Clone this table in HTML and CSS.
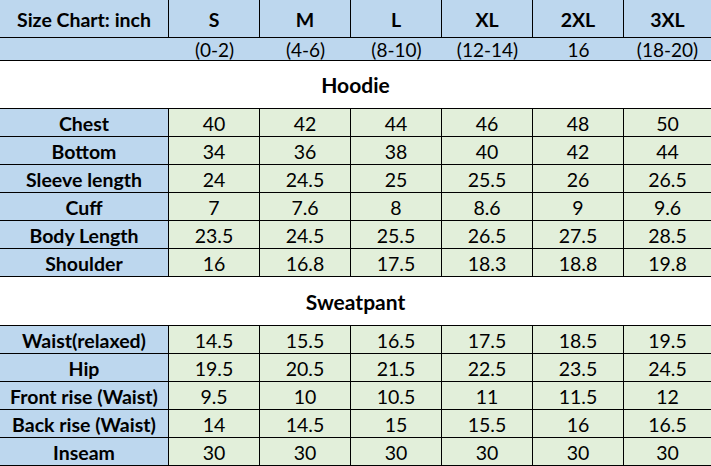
FILE: index.html
```html
<!DOCTYPE html>
<html>
<head>
<meta charset="utf-8">
<link rel="stylesheet" href="styles.css">
</head>
<body>
<div class="chart">
  <div class="c hd lbl">Size Chart: inch</div>
  <div class="c hd">S</div>
  <div class="c hd">M</div>
  <div class="c hd">L</div>
  <div class="c hd">XL</div>
  <div class="c hd">2XL</div>
  <div class="c hd last">3XL</div>

  <div class="c sub"></div>
  <div class="c sub">(0-2)</div>
  <div class="c sub">(4-6)</div>
  <div class="c sub">(8-10)</div>
  <div class="c sub">(12-14)</div>
  <div class="c sub">16</div>
  <div class="c sub">(18-20)</div>

  <div class="title t1">Hoodie</div>

  <div class="c lbl">Chest</div><div class="c v">40</div><div class="c v">42</div><div class="c v">44</div><div class="c v">46</div><div class="c v">48</div><div class="c v last">50</div>
  <div class="c lbl">Bottom</div><div class="c v">34</div><div class="c v">36</div><div class="c v">38</div><div class="c v">40</div><div class="c v">42</div><div class="c v last">44</div>
  <div class="c lbl">Sleeve length</div><div class="c v">24</div><div class="c v">24.5</div><div class="c v">25</div><div class="c v">25.5</div><div class="c v">26</div><div class="c v last">26.5</div>
  <div class="c lbl">Cuff</div><div class="c v">7</div><div class="c v">7.6</div><div class="c v">8</div><div class="c v">8.6</div><div class="c v">9</div><div class="c v last">9.6</div>
  <div class="c lbl">Body Length</div><div class="c v">23.5</div><div class="c v">24.5</div><div class="c v">25.5</div><div class="c v">26.5</div><div class="c v">27.5</div><div class="c v last">28.5</div>
  <div class="c lbl">Shoulder</div><div class="c v">16</div><div class="c v">16.8</div><div class="c v">17.5</div><div class="c v">18.3</div><div class="c v">18.8</div><div class="c v last">19.8</div>

  <div class="title t2">Sweatpant</div>

  <div class="c lbl">Waist(relaxed)</div><div class="c v">14.5</div><div class="c v">15.5</div><div class="c v">16.5</div><div class="c v">17.5</div><div class="c v">18.5</div><div class="c v last">19.5</div>
  <div class="c lbl">Hip</div><div class="c v">19.5</div><div class="c v">20.5</div><div class="c v">21.5</div><div class="c v">22.5</div><div class="c v">23.5</div><div class="c v last">24.5</div>
  <div class="c lbl">Front rise (Waist)</div><div class="c v">9.5</div><div class="c v">10</div><div class="c v">10.5</div><div class="c v">11</div><div class="c v">11.5</div><div class="c v last">12</div>
  <div class="c lbl">Back rise (Waist)</div><div class="c v">14</div><div class="c v">14.5</div><div class="c v">15</div><div class="c v">15.5</div><div class="c v">16</div><div class="c v last">16.5</div>
  <div class="c lbl">Inseam</div><div class="c v">30</div><div class="c v">30</div><div class="c v">30</div><div class="c v">30</div><div class="c v">30</div><div class="c v last">30</div>
</div>
</body>
</html>
```

FILE: styles.css
```css
html, body {
  margin: 0;
  padding: 0;
  background: #ffffff;
}

.chart {
  width: 711px;
  display: grid;
  grid-template-columns: 169px repeat(5, 91px) 87px;
  grid-template-rows: 38px 23px 48px repeat(6, 28px) 49px repeat(5, 28px);
  font-family: Lato, "Open Sans", sans-serif;
  font-size: 19.5px;
  color: #000000;
}

.c {
  display: flex;
  align-items: center;
  justify-content: center;
  box-sizing: border-box;
  border-bottom: 1px solid #000;
  border-right: 1px solid #000;
  white-space: nowrap;
  padding-top: 1px;
}

.c.last {
  border-right: none;
}

.hd {
  background: #bdd7ee;
  font-weight: 700;
  font-size: 19.5px;
}

.sub {
  background: #bdd7ee;
  border-right: none;
  font-size: 19px;
  padding-top: 0;
}

.lbl {
  background: #bdd7ee;
  font-weight: 700;
}

.v {
  background: #e2efda;
}

.title {
  grid-column: 1 / -1;
  display: flex;
  align-items: center;
  justify-content: center;
  box-sizing: border-box;
  border-bottom: 1px solid #000;
  font-weight: 700;
  font-size: 21px;
  background: #ffffff;
}
```
